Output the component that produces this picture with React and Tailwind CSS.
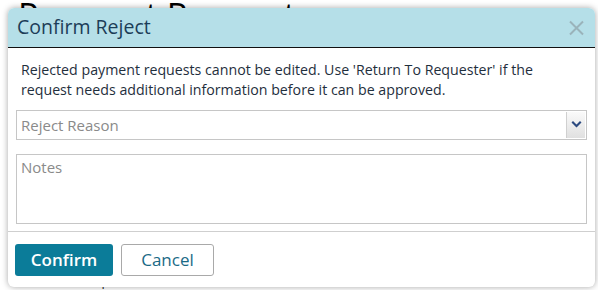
import React from "react";

function CloseIcon() {
  return (
    <svg width="15" height="16" viewBox="0 0 15 16" fill="none">
      <path d="M1 1.5 L14 14.5 M14 1.5 L1 14.5" stroke="#9ab3ba" strokeWidth="2" />
    </svg>
  );
}

function Chevron() {
  return (
    <svg width="11" height="8" viewBox="0 0 11 8">
      <path d="M0.5 1.5 L2 0 L5.5 3.5 L9 0 L10.5 1.5 L5.5 6.5 Z" fill="#2c4a80" />
    </svg>
  );
}

export default function App() {
  return (
    <div className="relative w-[598px] h-[290px] overflow-hidden bg-white font-['Open_Sans',sans-serif]">
      {/* page behind the modal */}
      <div className="flex flex-col px-[18px]">
        <h1 className="text-[34px] leading-[42px] text-black -mt-[6px]">Payment Request</h1>
        <div className="mt-[232px] pl-[4px] text-[15px] text-[#222]">Custom ID | 110-00100</div>
      </div>

      {/* modal */}
      <div className="absolute left-[8px] top-[8px] w-[587px] h-[279px] bg-white rounded-[6px] shadow-[0_0_6px_rgba(0,0,0,0.35)] overflow-hidden flex flex-col">
        <div className="h-[40px] bg-[#b5dfe8] border-b border-[#111] flex items-center justify-between pl-[9px] pr-[11px]">
          <span className="text-[19.5px] text-[#1c3d58] leading-none pb-[1px]">Confirm Reject</span>
          <CloseIcon />
        </div>

        <div className="flex flex-col px-[8px] pt-[12px]">
          <p className="text-[14.2px] leading-[20px] text-[#1f2f3d] pl-[5px]">
            Rejected payment requests cannot be edited. Use 'Return To Requester' if the
            <br />
            request needs additional information before it can be approved.
          </p>

          <div className="mt-[10px] h-[30px] border border-[#c6c6c6] flex items-stretch">
            <span className="flex-1 flex items-center pl-[4px] text-[15px] text-[#8a8a8a]">Reject Reason</span>
            <div className="w-[19px] my-[1px] mr-[1px] border-l border-[#d0d0d0] bg-gradient-to-b from-[#fafafa] to-[#e0e0e0] flex items-center justify-center">
              <Chevron />
            </div>
          </div>

          <div className="mt-[14px] h-[70px] border border-[#c6c6c6] pl-[4px] pt-[1px] text-[15px] text-[#8a8a8a]">
            Notes
          </div>
        </div>

        <div className="mt-[7px] border-t border-[#cfcfcf] flex gap-[8px] px-[7px] pt-[12px]">
          <button className="w-[98px] h-[32px] rounded-[3px] bg-[#0b7c99] text-white text-[17px] font-semibold">Confirm</button>
          <button className="w-[93px] h-[32px] rounded-[3px] border border-[#a9a9a9] bg-white text-[#1a6a86] text-[17px]">Cancel</button>
        </div>
      </div>
    </div>
  );
}
